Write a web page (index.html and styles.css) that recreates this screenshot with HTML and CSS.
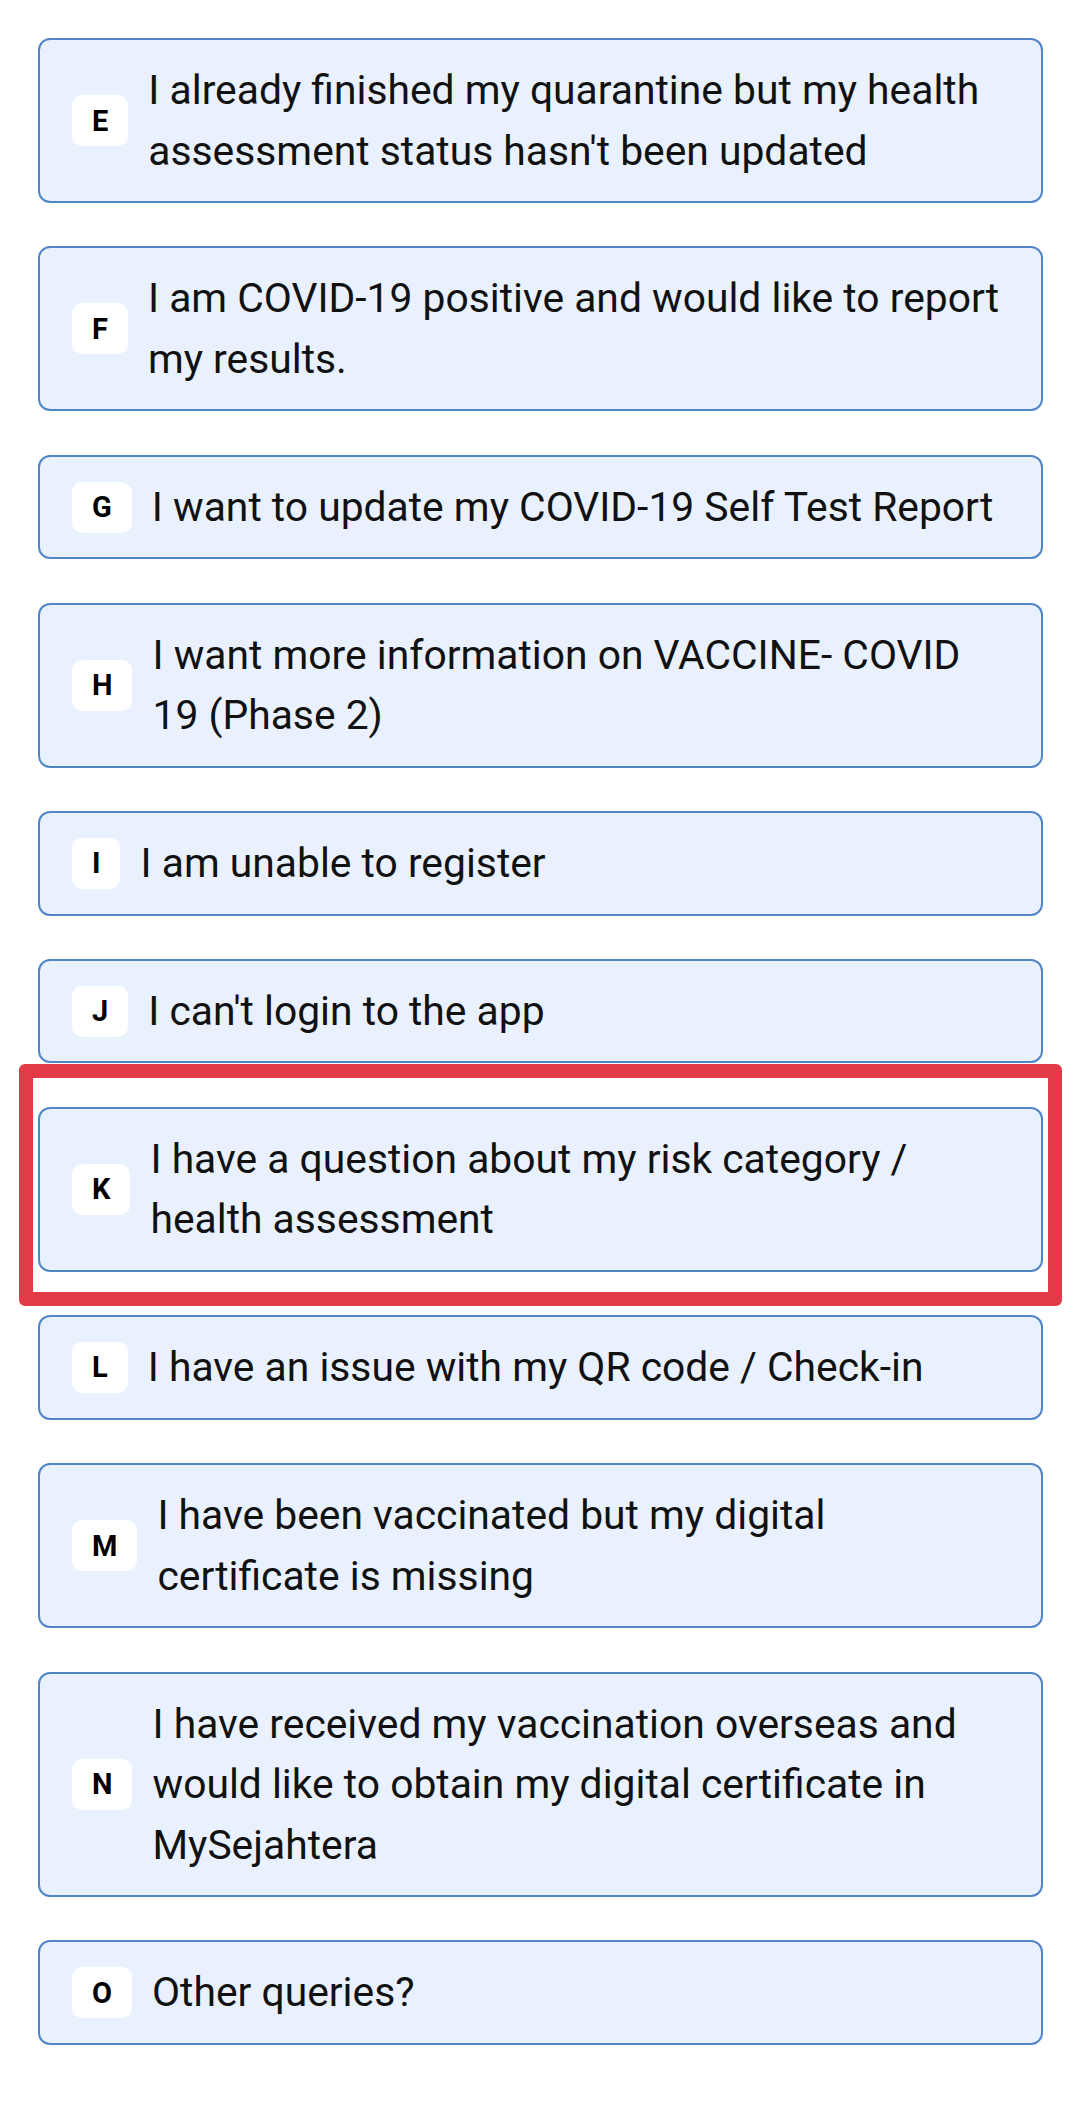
FILE: index.html
```html
<!DOCTYPE html>
<html lang="en">
<head>
<meta charset="utf-8">
<title>Help topics</title>
<link rel="stylesheet" href="styles.css">
</head>
<body>
<main class="list">
  <div class="card"><span class="badge">E</span><span class="label">I already finished my quarantine but my health assessment status hasn't been updated</span></div>
  <div class="card"><span class="badge">F</span><span class="label">I am COVID-19 positive and would like to report my results.</span></div>
  <div class="card"><span class="badge">G</span><span class="label">I want to update my COVID-19 Self Test Report</span></div>
  <div class="card"><span class="badge">H</span><span class="label">I want more information on VACCINE- COVID 19 (Phase 2)</span></div>
  <div class="card"><span class="badge">I</span><span class="label">I am unable to register</span></div>
  <div class="card"><span class="badge">J</span><span class="label">I can't login to the app</span></div>
  <div class="card card-highlighted"><span class="badge">K</span><span class="label">I have a question about my risk category / health assessment</span></div>
  <div class="card"><span class="badge">L</span><span class="label">I have an issue with my QR code / Check-in</span></div>
  <div class="card"><span class="badge">M</span><span class="label">I have been vaccinated but my digital certificate is missing</span></div>
  <div class="card"><span class="badge">N</span><span class="label">I have received my vaccination overseas and would like to obtain my digital certificate in MySejahtera</span></div>
  <div class="card"><span class="badge">O</span><span class="label">Other queries?</span></div>
</main>
</body>
</html>
```
FILE: styles.css
```css
* { box-sizing: border-box; }

html, body {
  margin: 0;
  padding: 0;
  background: #ffffff;
}

body {
  font-family: Roboto, "Noto Sans", "Liberation Sans", sans-serif;
  color: #111111;
}

.list {
  display: flex;
  flex-direction: column;
  gap: 43.4px;
  padding: 38px 37px 0 38px;
}

.card {
  position: relative;
  display: flex;
  align-items: center;
  gap: 20px;
  padding: 20px 32px;
  background: #e8f1fd;
  border: 2px solid #5285c6;
  border-radius: 12px;
}

.badge {
  flex: none;
  display: flex;
  align-items: center;
  justify-content: center;
  height: 51px;
  padding: 0 20px;
  background: #ffffff;
  border-radius: 10px;
  font-size: 29px;
  font-weight: 700;
  color: #000000;
}

.label {
  flex: 1;
  font-size: 40.8px;
  line-height: 60.5px;
  color: #111111;
}

.card-highlighted::after {
  content: "";
  position: absolute;
  top: -45px;
  bottom: -36px;
  left: -21px;
  right: -21px;
  border: 14px solid #e23a46;
  border-radius: 6px;
  pointer-events: none;
}
```
